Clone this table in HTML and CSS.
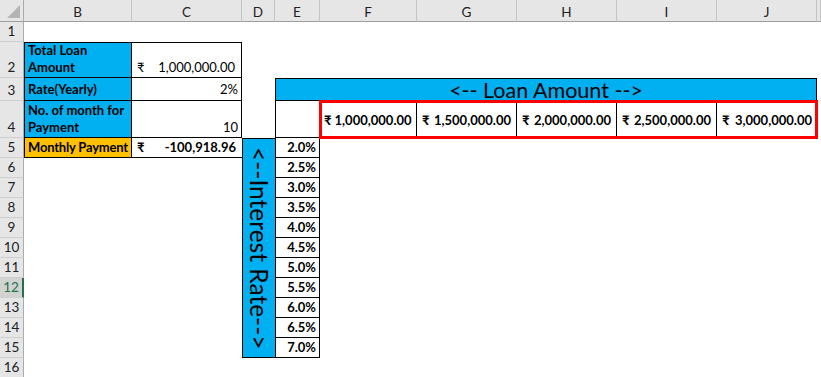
FILE: index.html
```html
<!DOCTYPE html>
<html>
<head>
<meta charset="utf-8">
<title>Loan Sheet</title>
<link rel="stylesheet" href="styles.css">
</head>
<body>
<div class="sheet">
  <div class="corner"><svg class="tri" width="13" height="13" viewBox="0 0 13 13"><polygon points="13,0 13,13 0,13" fill="#B4B4B4"/></svg></div>
  <div class="ch cB">B</div>
  <div class="ch cC">C</div>
  <div class="ch cD">D</div>
  <div class="ch cE">E</div>
  <div class="ch cF">F</div>
  <div class="ch cG">G</div>
  <div class="ch cH">H</div>
  <div class="ch cI">I</div>
  <div class="ch cJ">J</div>
  <div class="ch cK"></div>

  <div class="rh r1">1</div>
  <div class="rh r2">2</div>
  <div class="rh r3">3</div>
  <div class="rh r4">4</div>
  <div class="rh r5">5</div>
  <div class="rh r6">6</div>
  <div class="rh r7">7</div>
  <div class="rh r8">8</div>
  <div class="rh r9">9</div>
  <div class="rh r10">10</div>
  <div class="rh r11">11</div>
  <div class="rh r12 sel">12</div>
  <div class="rh r13">13</div>
  <div class="rh r14">14</div>
  <div class="rh r15">15</div>
  <div class="rh r16">16</div>

  <!-- input table -->
  <div class="cell cB r2 box bt bl blue b"><span>Total Loan<br>Amount</span></div>
  <div class="cell cC r2 box bt acct"><span>₹</span><span>1,000,000.00</span></div>
  <div class="cell cB r3 box bl blue b mid"><span>Rate(Yearly)</span></div>
  <div class="cell cC r3 box num mid"><span>2%</span></div>
  <div class="cell cB r4 box bl blue b"><span>No. of month for<br>Payment</span></div>
  <div class="cell cC r4 box num"><span>10</span></div>
  <div class="cell cB r5 box bl orange b tight"><span>Monthly Payment</span></div>
  <div class="cell cC r5 box nr acct b"><span>₹</span><span>-100,918.96</span></div>

  <!-- data table -->
  <div class="loanhead">&lt;-- Loan Amount --&gt;</div>
  <div class="cell cE r4 box bl"></div>
  <div class="amounts">
    <div class="amt amt-f"><span>₹</span><span>1,000,000.00</span></div>
    <div class="amt"><span>₹</span><span>1,500,000.00</span></div>
    <div class="amt"><span>₹</span><span>2,000,000.00</span></div>
    <div class="amt"><span>₹</span><span>2,500,000.00</span></div>
    <div class="amt"><span>₹</span><span>3,000,000.00</span></div>
  </div>
  <div class="ratehead"><span>&lt;--Interest Rate--&gt;</span></div>
  <div class="cell cE r5 box bl num b"><span>2.0%</span></div>
  <div class="cell cE r6 box bl num b"><span>2.5%</span></div>
  <div class="cell cE r7 box bl num b"><span>3.0%</span></div>
  <div class="cell cE r8 box bl num b"><span>3.5%</span></div>
  <div class="cell cE r9 box bl num b"><span>4.0%</span></div>
  <div class="cell cE r10 box bl num b"><span>4.5%</span></div>
  <div class="cell cE r11 box bl num b"><span>5.0%</span></div>
  <div class="cell cE r12 box bl num b"><span>5.5%</span></div>
  <div class="cell cE r13 box bl num b"><span>6.0%</span></div>
  <div class="cell cE r14 box bl num b"><span>6.5%</span></div>
  <div class="cell cE r15 box bl num b"><span>7.0%</span></div>
</div>
</body>
</html>
```

FILE: styles.css
```css
* { box-sizing: border-box; margin: 0; padding: 0; }
html, body { background: #fff; }
body {
  margin: 0;
  font-family: Lato, "Noto Sans", "DejaVu Sans", sans-serif;
  font-size: 13px;
  color: #000;
  overflow: hidden;
}
.sheet {
  display: grid;
  grid-template-columns: 24px 108px 110px 33px 45px 97px 100px 100px 100px 100px 4px;
  grid-template-rows: 22px 20px 36px 23px 37px 20px repeat(11, 20px);
  width: 821px;
  height: 377px;
  overflow: hidden;
}

/* headers */
.corner {
  grid-row: 1; grid-column: 1;
  background: #E6E6E6;
  border-right: 1px solid #ABABAB;
  border-bottom: 1px solid #9E9E9E;
  display: flex; align-items: flex-end; justify-content: flex-end;
  padding: 0 3px 3px 0;
}
.tri { display: block; }
.ch {
  grid-row: 1;
  background: #E6E6E6;
  border-right: 1px solid #C3C3C3;
  border-bottom: 1px solid #9E9E9E;
  display: flex; align-items: center; justify-content: center;
  padding-top: 2px;
  font-size: 13.5px;
  color: #222;
}
.rh {
  grid-column: 1;
  background: #E6E6E6;
  border-right: 1px solid #ABABAB;
  border-bottom: 1px solid #CFCFCF;
  display: flex; align-items: flex-end; justify-content: center;
  line-height: 17px;
  padding-bottom: 1px;
  font-size: 13.5px;
  color: #222;
}
.rh.sel {
  background: #D2D2D2;
  border-right: 2px solid #217346;
  color: #217346;
}

/* column placement */
.cB { grid-column: 2; }
.cC { grid-column: 3; }
.cD { grid-column: 4; }
.cE { grid-column: 5; }
.cF { grid-column: 6; }
.cG { grid-column: 7; }
.cH { grid-column: 8; }
.cI { grid-column: 9; }
.cJ { grid-column: 10; }
.cK { grid-column: 11; }

/* row placement */
.r1 { grid-row: 2; }
.r2 { grid-row: 3; }
.r3 { grid-row: 4; }
.r4 { grid-row: 5; }
.r5 { grid-row: 6; }
.r6 { grid-row: 7; }
.r7 { grid-row: 8; }
.r8 { grid-row: 9; }
.r9 { grid-row: 10; }
.r10 { grid-row: 11; }
.r11 { grid-row: 12; }
.r12 { grid-row: 13; }
.r13 { grid-row: 14; }
.r14 { grid-row: 15; }
.r15 { grid-row: 16; }
.r16 { grid-row: 17; }

/* cells */
.cell {
  display: flex;
  align-items: flex-end;
  padding: 0 3px 1px 3px;
  line-height: 17px;
  white-space: nowrap;
}
.box { border-right: 1px solid #000; border-bottom: 1px solid #000; }
.bt { border-top: 1px solid #000; }
.bl { border-left: 1px solid #000; }
.nr { border-right: 0; }
.b { font-weight: 700; }
.blue { background: #00B0F0; }
.orange { background: #FFC000; }
.num { justify-content: flex-end; }
.mid { align-items: center; padding-bottom: 0; }
.acct { justify-content: space-between; padding: 0 6px 1px 5px; }
.tight { letter-spacing: -0.2px; }

/* loan amount header (E3:J3 merged) */
.loanhead {
  grid-column: 5 / 11;
  grid-row: 4;
  background: #00B0F0;
  border: 1px solid #000;
  display: flex; align-items: center; justify-content: center;
  font-size: 21.5px;
  line-height: 21px;
  padding-top: 1px;
}

/* amount row F4:J4 with red outline */
.amounts {
  grid-column: 6 / 11;
  grid-row: 5;
  display: grid;
  grid-template-columns: 97px 100px 100px 100px 100px;
  border-bottom: 1px solid #000;
  outline: 3px solid #FF0000;
  outline-offset: -2px;
  position: relative;
  z-index: 1;
}
.amt {
  display: flex;
  align-items: center;
  justify-content: space-between;
  padding: 2px 5px 0 5px;
  font-weight: 700;
  border-right: 1px solid #000;
  white-space: nowrap;
}
.amt:last-child { border-right: 0; }
.amt-f { justify-content: flex-start; gap: 3px; padding-left: 4px; }

/* interest rate header D5:D15 merged */
.ratehead {
  grid-column: 4;
  grid-row: 6 / 17;
  background: #00B0F0;
  border-top: 1px solid #000;
  border-left: 1px solid #000;
  border-bottom: 1px solid #000;
  display: flex; align-items: center; justify-content: center;
}
.ratehead span {
  writing-mode: vertical-rl;
  font-size: 24.5px;
  line-height: 26px;
  white-space: nowrap;
}
```
